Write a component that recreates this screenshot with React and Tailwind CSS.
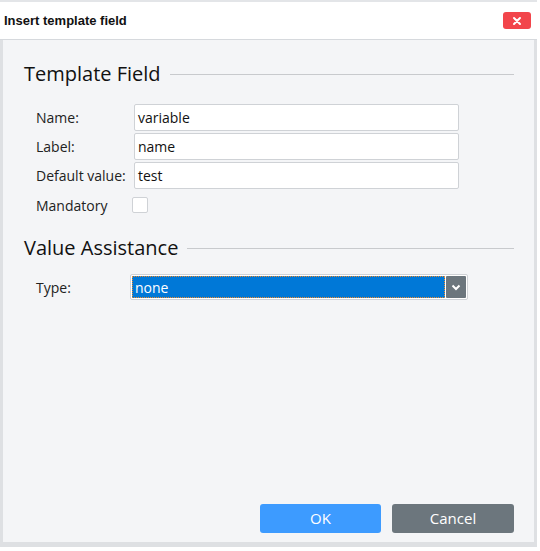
import React from "react";

const Row = ({ label, value }) => (
  <div className="flex items-center h-[28px]">
    <span className="w-[98px] text-[14px] text-[#222]">{label}</span>
    <div className="w-[325px] h-[27px] bg-white border border-[#cfd2d6] rounded-[2px] flex items-center px-[3px] text-[14px] text-[#111]">
      {value}
    </div>
  </div>
);

const Section = ({ title }) => (
  <div className="flex items-center">
    <span className="text-[20px] text-[#111] leading-none">{title}</span>
    <div className="flex-1 h-px bg-[#c8cacd] ml-[9px]" />
  </div>
);

export default function App() {
  return (
    <div
      className="w-[540px] h-[551px] bg-white flex flex-col overflow-hidden"
      style={{ fontFamily: '"Open Sans", "Noto Sans", sans-serif' }}
    >
      <div className="w-[537px] h-[547px] flex flex-col">
        {/* title bar */}
        <div className="h-[40px] border-t-2 border-[#e3e5e8] border-b border-b-[#d6d9dd] flex items-center justify-between pl-[4px] pr-[6px] bg-white">
          <span
            className="text-[13px] font-bold text-[#111]"
            style={{ fontFamily: '"Liberation Sans", Arial, sans-serif' }}
          >
            Insert template field
          </span>
          <button className="w-[28px] h-[17px] bg-[#f2454b] rounded-[3px] flex items-center justify-center">
            <svg width="10" height="10" viewBox="0 0 10 10">
              <path d="M2 2 L8 8 M8 2 L2 8" stroke="white" strokeWidth="2" strokeLinecap="round" />
            </svg>
          </button>
        </div>

        {/* body */}
        <div className="flex-1 bg-[#f4f5f7] border-l-[3px] border-r-[3px] border-b-[5px] border-[#dee0e3] flex flex-col pl-[21px] pr-[20px] pt-[24px] pb-[9px]">
          <Section title="Template Field" />
          <div className="pl-[12px] mt-[19px] flex flex-col gap-[1px]">
            <Row label="Name:" value="variable" />
            <Row label="Label:" value="name" />
            <Row label="Default value:" value="test" />
            <div className="flex items-center h-[30px]">
              <span className="w-[96px] text-[14px] text-[#222]">Mandatory</span>
              <div className="w-[16px] h-[16px] bg-white border border-[#cfd2d6] rounded-[2px]" />
            </div>
          </div>

          <div className="mt-[18px]">
            <Section title="Value Assistance" />
          </div>
          <div className="pl-[12px] mt-[16px] flex items-center">
            <span className="w-[94px] text-[14px] text-[#222]">Type:</span>
            <div className="w-[338px] h-[26px] bg-white border border-[#cfd2d6] rounded-[2px] flex items-center p-[1px] gap-[1px]">
              <div className="flex-1 h-full bg-[#0078d7] border border-dotted border-[#e88a2e] flex items-center px-[2px] text-[14px] text-white">
                none
              </div>
              <div className="w-[20px] h-[22px] bg-[#6c767d] rounded-[1px] flex items-center justify-center">
                <svg width="10" height="7" viewBox="0 0 10 7">
                  <path d="M1.5 1.5 L5 5 L8.5 1.5" stroke="white" strokeWidth="2" fill="none" />
                </svg>
              </div>
            </div>
          </div>

          <div className="flex-1" />
          <div className="flex justify-end gap-[11px]">
            <button className="w-[121px] h-[29px] bg-[#3d9bff] rounded-[3px] text-white text-[15px]">OK</button>
            <button className="w-[122px] h-[29px] bg-[#6c767d] rounded-[3px] text-white text-[15px]">Cancel</button>
          </div>
        </div>
      </div>
    </div>
  );
}
